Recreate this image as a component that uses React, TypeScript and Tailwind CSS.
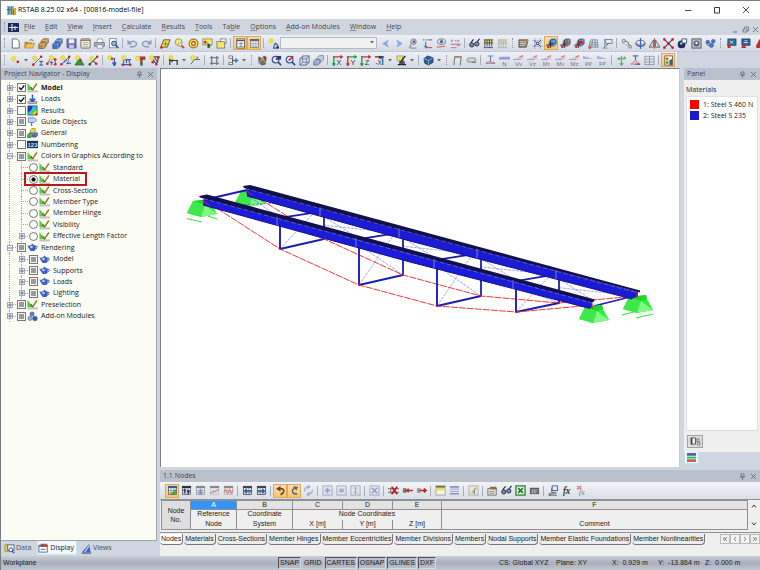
import type { ReactNode } from "react";
import clsx from "clsx";

const BLUE = "#2a4f94";

const Star = ({ x = 3.5, y = 3.5 }: { x?: number; y?: number }) => (
  <circle cx={x} cy={y} r="2.4" fill="#f6e33c" stroke="#d2bf48" strokeWidth=".6" />
);
const Dot = ({ x, y, c = "#cf2020" }: { x: number; y: number; c?: string }) => <circle cx={x} cy={y} r="1.4" fill={c} />;
const Glyph = ({ children, x = 6, y = 11, s = 7, c = "#444" }: { children: string; x?: number; y?: number; s?: number; c?: string }) => (
  <text x={x} y={y} fontSize={s} fill={c} textAnchor="middle" fontFamily="Liberation Sans, sans-serif">{children}</text>
);
const Line = ({ d, c = "#555", w = 1 }: { d: string; c?: string; w?: number }) => (
  <path d={d} stroke={c} strokeWidth={w} fill="none" />
);
const Grid = ({ c = "#555", head = "#444" }: { c?: string; head?: string }) => (
  <g>
    <rect x="1.5" y="1.5" width="9" height="9" fill="#eef1f6" stroke={c} strokeWidth=".8" />
    <rect x="1" y="1" width="10" height="2.4" fill={head} />
    <Line d="M1 6H11M1 8.5H11M4.5 3V11M7.5 3V11" c={c} w={0.5} />
  </g>
);
const Force = ({ t }: { t: string }) => (
  <g opacity=".85">
    <path d="M0 5L11 .5V5z" fill="#eebcc2" />
    <Line d="M0 5H8" c="#8d98e2" w={1.1} />
    <Line d="M7 2.5L11 .5" c="#d4606c" w={1.1} />
    <Glyph y={11.5} s={6.5} c="#666">{t}</Glyph>
  </g>
);
const Axis = ({ t, c1, c2 }: { t: string; c1: string; c2: string }) => (
  <g>
    <Line d="M1 2H11M9 .5L11.3 2L9 3.5" c={c1} w={1.3} />
    <Line d="M2 1V11M.5 9L2 11.5L3.5 9" c={c2} w={1.5} />
    <Glyph x={7.5} y={10.5} s={8} c="#333">{t}</Glyph>
  </g>
);
const Load = ({ c = "#777" }: { c?: string }) => (
  <g>
    <rect x="1" y="2" width="10" height="3" fill="#e2d65f" />
    <Line d="M1 2H11M1 5.5H11M2 2V9M4.5 2V9M7 2V9M9.5 2V9M1 10.5H11" c={c} w={0.9} />
    <Line d="M1 9.5L2 10.5L3 9.5M6 9.5L7 10.5L8 9.5" c={c} w={0.8} />
  </g>
);
const Cube = ({ x = 0, y = 0, c = "#3b6fb5", s = 1 }: { x?: number; y?: number; c?: string; s?: number }) => (
  <g transform={`translate(${x} ${y}) scale(${s})`}>
    <path d="M1 4L4 1H11V7L8 10H1z" fill={c} stroke="#333" strokeWidth=".7" />
    <path d="M1 4H8V10M8 4L11 1" fill="none" stroke="#fff" strokeOpacity=".6" strokeWidth=".7" />
  </g>
);
const Check = () => (
  <g>
    <path d="M.5 1L7 9H.5z" fill="#5cc942" />
    <path d="M1 9.6H11.5V11H1z" fill="#d5d7d5" stroke="#8f8f8f" strokeWidth=".4" />
    <Line d="M4 5.5L6 8.3" c="#4c7426" w={1.5} />
    <Line d="M5.8 8.8L10.8 1.5" c="#5e5a22" w={1.7} />
    <Line d="M6.2 7.6L10.6 1.3" c="#e8bd35" w={0.9} />
  </g>
);
const Teapot = () => (
  <g>
    <path d="M.5 3.5L3 4.5L4 8Q1.5 7.5 .5 3.5z" fill="#3f5fb8" />
    <path d="M9 4.6Q11.6 3.8 11 6.2Q10.4 7.6 9 7.8" fill="none" stroke="#344d9c" strokeWidth="1" />
    <path d="M2.6 4.2Q6 2 9.4 4.2Q10 8.6 7.8 9.8H4.2Q2 8.6 2.6 4.2z" fill="#3d5fbe" />
    <circle cx="4.9" cy="5.5" r="1.4" fill="#c6d4fa" />
    <rect x="5.2" y="2" width="1.6" height="1.1" fill="#2d4487" />
  </g>
);
const Nail = ({ c = "#2a7fd0" }: { c?: string }) => (
  <g>
    <path d="M3.5 3.5L6 1.2H11V6.5L8.7 8.7H3.5z" fill={c} stroke="#27405f" strokeWidth=".7" />
    <path d="M3.5 3.5H8.7V8.7M8.7 3.5L11 1.2" fill="none" stroke="#d7e8f8" strokeWidth=".6" />
    <Line d="M0 8L9 5.5M5 2V11" c="#333" w={0.9} />
    <Dot x={2.5} y={9.5} />
  </g>
);

const icons: Record<string, ReactNode> = {
  new: <path d="M2.5 1H7.5L10 3.5V11H2.5z" fill="#fff" stroke="#555" strokeWidth=".9" />,
  open: (
    <g>
      <path d="M.5 4H4L5 5H9V11H.5z" fill="#b98d1e" />
      <path d="M3 6H12L9.5 11H.7z" fill="#ecc850" stroke="#8e6b14" strokeWidth=".5" />
      <Line d="M6 2.5Q9 .5 10.5 3.5" c="#3d6e38" />
    </g>
  ),
  brownbox: <g><Cube x={3} y={0} c="#d09b4a" s={0.75} /><Cube x={0} y={3.5} c="#c38b38" s={0.8} /></g>,
  bluebox: <g><Cube x={3} y={0} c="#5d8ede" s={0.75} /><Cube x={0} y={3.5} c="#3f6ec4" s={0.8} /></g>,
  save: (
    <g>
      <path d="M1 1H11V11H2L1 10z" fill="#6e70b6" stroke="#45467d" strokeWidth=".7" />
      <rect x="3" y="1.3" width="6" height="4.5" fill="#eceefa" />
      <rect x="3.5" y="7.5" width="5" height="3.5" fill="#c9cbe4" />
    </g>
  ),
  report: (
    <g>
      <rect x="1" y="1" width="10" height="10" rx="1" fill="#f5f1e6" stroke="#6b665c" />
      <Line d="M1 2.5H11" c="#8b6b3c" w={1.2} /><Line d="M3 5H9M3 7H9M3 9H9" c="#a59d8a" w={0.9} />
    </g>
  ),
  print: (
    <g>
      <path d="M3 5L4 1H9L10 5" fill="#fff" stroke="#777" strokeWidth=".7" />
      <path d="M.7 5H11.3V9H.7z" fill="#aeb3be" stroke="#555" strokeWidth=".7" />
      <path d="M3 7.5H9L10 11H3.5z" fill="#fff" stroke="#66789e" strokeWidth=".7" />
    </g>
  ),
  preview: (
    <g>
      <rect x="1.5" y=".7" width="7.5" height="10" fill="#fafbfd" stroke="#777" strokeWidth=".8" />
      <circle cx="6.5" cy="6" r="2.6" fill="#8fb4e8" stroke={BLUE} /><Line d="M8.5 8L11.3 11" c={BLUE} w={1.7} />
    </g>
  ),
  undo: <g><path d="M.5 1.5V7H6z" fill="#8b9dc2" /><Line d="M2.5 5Q7 2 10 5Q11.5 8.5 7 9.5H3" c="#8b9dc2" w={1.5} /></g>,
  redo: <g><path d="M11.5 1.5V7H6z" fill="#8b9dc2" /><Line d="M9.5 5Q5 2 2 5Q.5 8.5 5 9.5H9" c="#8b9dc2" w={1.5} /></g>,
  plane: <g><path d="M4 2H11L8 10H1z" fill="#f5df3f" stroke="#444" strokeWidth=".9" /><Line d="M4 6.5H9M6 4V9" c="#7c762a" /><Dot x={1.5} y={10.3} /></g>,
  zoomy: <g><circle cx="5" cy="4.5" r="3.7" fill="#f6ea7a" stroke="#8d8237" strokeWidth=".8" /><Line d="M8 8L11 11" c="#b04536" w={1.8} /><path d="M4.500 5.500L9 5.500L7 10z" fill="#fff" stroke="#777" strokeWidth=".6" /></g>,
  target: <g><circle cx="6" cy="6" r="4.8" fill="#f4e63e" stroke="#a4761c" strokeWidth="1.3" /><circle cx="6" cy="6" r="2" fill="#fff" stroke="#a03c2a" strokeWidth="1.2" /></g>,
  select: <g><rect x="1" y="1" width="10" height="6.5" fill="#f8ec57" stroke="#777" strokeWidth=".8" /><Dot x={3.5} y={4.5} /><path d="M6 4.500L10 9H8L9 11.500L7 10.500L6 11z" fill="#345" /></g>,
  window: <g><rect x="5" y="1" width="6" height="5" fill="#fff" stroke="#777" strokeWidth=".9" /><rect x="1" y="4" width="8.5" height="7" fill="#f7e860" stroke="#777" strokeWidth=".9" /></g>,
  tabs: <g><rect x="2" y="1" width="8.5" height="10" fill="#f4f4f6" stroke="#555" /><Line d="M2 2.8H10" c="#555" w={1.2} /><Line d="M4 6H9M4 9H9M6.5 4.5V10" c="#777" w={0.8} /></g>,
  table: <Grid c="#777" head="#666" />,
  lights: <g><Star x={3.5} y={3} /><Line d="M6 11L7 7H10L11 11zM7 7L9 5" c="#3c6bb0" w={1.3} /><Dot x={10.5} y={10} c="#333" /></g>,
  prev: <path d="M9 2.500L3 6L9 9.500L7 6z" fill="#7fb0f0" stroke="#5f8cd6" strokeWidth=".5" />,
  next: <path d="M3 2.500L9 6L3 9.500L5 6z" fill="#7fb0f0" stroke="#5f8cd6" strokeWidth=".5" />,
  view1: <g opacity=".8"><circle cx="6" cy="4" r="3" fill="#b5c4dd" stroke="#667" /><circle cx="6.5" cy="4" r="1.3" fill="#334" /><Line d="M3 6V11H9M1 9L3 11" c="#888" w={1.2} /></g>,
  view2: <g><Line d="M1 2H3M4.5 2H6M7 2H11" c="#777" w={1.5} /><Line d="M4 4V10M2.5 8.5L4 10.5L5.5 8.5" c="#3c86b8" w={1.2} /><Line d="M4 10.5H11" c="#c33" /></g>,
  view3: <g opacity=".85"><ellipse cx="6" cy="4" rx="4.5" ry="3" fill="#ccd7e8" stroke="#667" /><circle cx="6" cy="4" r="1.6" fill="#233f78" /><Line d="M1 10L10 9" c="#d55" w={1.3} /></g>,
  view4: <g><Line d="M1 2L3 4M3 2L1 4M5 3H7M8 2L10 4M10 2L8 4" c="#888" /><Line d="M1 7H11M8 6L11 7L8 9" c="#d97c84" w={1.2} /><Line d="M1 10.5H7" c="#7aa4d6" w={1.2} /></g>,
  glasses: <g><circle cx="3" cy="7.5" r="2.3" fill="#7593c5" stroke="#223" /><circle cx="8.5" cy="6.5" r="2.3" fill="#7593c5" stroke="#223" /><Line d="M2 5L5 1.5M9 4L11.5 1" c="#223" w={1.2} /></g>,
  calc: <Load c="#3d3d48" />,
  calcg: <g opacity=".5"><Load /></g>,
  note: <g><path d="M1 2H11L9 10H1z" fill="#8f8776" stroke="#444" strokeWidth=".8" /><Line d="M2 4H9M2 6H9M2 8H8" c="#e7dcbf" w={0.8} /><Dot x={9.5} y={3} c="#c08a2a" /></g>,
  snap: <g><Line d="M0 3H12M0 9H12M3 0V12M9 0V12" c="#999" w={0.7} /><Line d="M2.5 2.5L9.5 9.5M9.5 2.5L2.5 9.5" c="#3b4fb8" w={1} /><circle cx="6" cy="6" r="2" fill="#4053bd" /><circle cx="6" cy="6" r=".8" fill="#fff" /></g>,
  nail: <Nail />,
  nail2: <g><Nail c="#3f8fd0" /><rect x="6" y="2.500" width="3" height="5" fill="#cc4b3a" /></g>,
  nail3: <g><Nail c="#2e9bd8" /><rect x="5" y="3" width="4.500" height="4" fill="#d02222" /></g>,
  mesh: <g opacity=".8"><Line d="M3 2H10L11 10H1zM2 5H10.5M1.5 7.5H11M5 2L4 10M7.5 2L8 10" c="#55707f" w={0.9} /><Dot x={2} y={10.5} /></g>,
  flag: <g><Line d="M3 1V11M1 11H6" c="#7686a4" /><rect x="4" y="1.500" width="7" height="4.500" fill="#dfe7f2" stroke="#577" strokeWidth=".8" /><Line d="M4 9L7 6" c="#444" /></g>,
  curve: <g><circle cx="3" cy="3" r="1.6" fill="#eee" stroke="#555" strokeWidth=".8" /><Line d="M4.5 3Q8 3.5 9.5 9" c="#555" /><circle cx="10" cy="9.500" r="1.5" fill="#eee" stroke="#555" strokeWidth=".8" /><Line d="M1 5L8 9" c="#899" w={0.7} /></g>,
  rotate: <g><ellipse cx="6" cy="6" rx="5" ry="3.500" fill="none" stroke="#a04d66" /><Line d="M6 0V12" c="#3b64b5" w={1.3} /><Line d="M1 6Q6 11 11 6" c="#4676c5" w={1.4} /></g>,
  mirror: <g><path d="M5 2V10H0zM7 2V10H12z" fill="#d3d6dc" stroke="#555" strokeWidth=".9" /><Line d="M6 0V12" c="#944" w={0.8} /></g>,
  cross: <g><Line d="M1.5 1.5L10.5 10.5M10.5 1.5L1.5 10.5" c="#444" w={1.3} /><Dot x={1.5} y={1.5} /><Dot x={10.5} y={1.5} /><Dot x={1.5} y={10.5} /><Dot x={10.5} y={10.5} /><Dot x={6} y={6} /></g>,
  sphere: <g><circle cx="5" cy="7" r="4.2" fill="#232a5c" /><rect x="5.500" y="1" width="5" height="4.500" fill="#fff" stroke="#456" /><circle cx="4.500" cy="6" r="1.3" fill="#a4b8ea" /></g>,
  eyebox: <g><rect x="1" y="1" width="10" height="10" fill="#c7c9a5" stroke="#555" /><circle cx="6" cy="6" r="3.3" fill="#4761a3" /><circle cx="6" cy="5.500" r="1.3" fill="#fff" /></g>,
  cluster: <g fill="#4b76c2" stroke="#26467f" strokeWidth=".6"><circle cx="3" cy="4.500" r="2" /><circle cx="9" cy="3.500" r="2" /><circle cx="7" cy="8" r="2.300" /><circle cx="3.500" cy="7" r="1.300" fill="#bcd0f2" /></g>,
  mod1: <g><rect x="2" y="1" width="9" height="7" fill="#236b9c" stroke="#234" strokeWidth=".6" /><Line d="M4 3L8 6M8 3L4 6" c="#bfe3f3" /><path d="M1 6L5 7V11H2z" fill="#cf2a2a" /></g>,
  mod2: <g><rect x="2" y="1" width="9" height="7" fill="#235d96" stroke="#234" strokeWidth=".6" /><Line d="M4 5H9M5 3H8" c="#d6e9f5" /><path d="M1 11L4 6.500L7 11z" fill="#cf2a2a" /></g>,
  mod3: <g><path d="M2 9L6 1L10 5V11H3z" fill="#c32c2c" /><rect x="7" y="2" width="4" height="5" fill="#2b5f94" /></g>,
  node: <g><Star x={4} y={4} /><Dot x={8.5} y={7.5} /></g>,
  line: <g><Line d="M1 11L10 2" c="#666" /><Star x={3} y={3.5} /><Dot x={1.5} y={10.5} /><Dot x={10} y={2} /><Line d="M8 7H12M10 7V11M8 11H12" c={BLUE} /></g>,
  arch: <g><Line d="M1.5 9L5 4H9L11 10" c="#666" /><Star x={6} y={3} /><Dot x={1.5} y={9.5} /><Dot x={10} y={10} /><Dot x={10} y={5} /><Line d="M4 8H8M6 7V11" c={BLUE} /></g>,
  member: <g><Line d="M1 11L10 2L8 10" c="#666" /><Star x={3} y={3} /><Dot x={10} y={2} /><Dot x={1.5} y={10} /><Line d="M7 9H12M4 8L7 5" c={BLUE} w={1.3} /></g>,
  support: <g><path d="M6 3L11 11H1z" fill="#2f9b3e" stroke="#19622a" strokeWidth=".6" /><Star x={4} y={3} /><Dot x={7} y={5.5} /></g>,
  hinge: <g><Line d="M2 10L10 2M3 3L9 10" c="#555" w={1.2} /><Star x={4} y={4} /><Dot x={10} y={2} /><Dot x={2} y={10} c="#444" /><Dot x={9} y={9.5} /></g>,
  nload: <g><Star x={3} y={3} /><Dot x={5.5} y={4} /><Line d="M8 3V10M6 8L8 11L10 8" c="#3558b8" w={1.4} /><Dot x={8} y={10.5} c="#3558b8" /></g>,
  mload: <g><Line d="M2 5H11M3 5V9M6 5V9M9 5V9M1 10.5H11" c="#3558b8" w={1.2} /><Star x={3} y={3} /><Dot x={2} y={10.5} /><Dot x={10} y={10.5} /></g>,
  tload: <g><path d="M3 2H11V5H8V10H6V5H3z" fill="#c42a2a" stroke="#444" strokeWidth=".5" /><Star x={3} y={3.5} /><Dot x={7} y={10.5} c="#2c8b37" /></g>,
  free: <g><Line d="M2 2H11L8 10zM6 3L10 8" c="#444" w={1.2} /><Star x={3} y={3} /><Dot x={10} y={3} /><Dot x={8} y={10} /><Dot x={4} y={8} /></g>,
  dim: <g><Star x={3} y={3} /><Line d="M1 6H11M2 4V11M10 6V11M5 5L4 8" c="#333" w={1.3} /></g>,
  dimx: <g><Star x={3} y={3} /><Line d="M1 10L5 5H11M7 2L9 4M9 2L7 4" c="#555" /></g>,
  grid: <Line d="M3 1V11M8.5 1V11M1 3H11M1 9H11" c="#65696e" w={1.1} />,
  tree: <g><Line d="M1 2H5V10H1M5 6H9" c="#555" w={1.1} /><rect x="1" y="1" width="4" height="2.600" fill="#eee" stroke="#555" strokeWidth=".7" /><rect x="1" y="8" width="4" height="2.600" fill="#eee" stroke="#555" strokeWidth=".7" /><path d="M8 3L11.500 6L8 9z" fill="#3a7ad0" /></g>,
  hand: <g><path d="M2 2L5 4L8 1L10 4L9 10L5 11L2 8z" fill="#7f6d5d" stroke="#443a33" strokeWidth=".7" /><Line d="M1 9L9 2M4 2L10 9" c="#c7b8a4" /><Dot x={9} y={3} c="#933" /></g>,
  zoomw: <g><circle cx="5" cy="5" r="3.700" fill="#dbe6f6" stroke={BLUE} strokeWidth="1.200" /><Line d="M7.5 7.5L11 11" c={BLUE} w={1.9} /><path d="M6 1H11V5H6z" fill="#1e3f86" /><Dot x={6.5} y={4} /></g>,
  zooma: <g><circle cx="5" cy="5" r="3.700" fill="#e6e6f2" stroke={BLUE} strokeWidth="1.200" /><Line d="M7.5 7.5L11 11" c={BLUE} w={1.9} /><Line d="M4 6L9 1.5" c="#c22" w={1.8} /></g>,
  cube: <g><path d="M1 4L4 1H11V8L8 11H1z" fill="#d5deed" stroke="#4c6388" strokeWidth=".9" /><path d="M1 4H8V11M8 4L11 1M4 1V8H11M4 8L1 11" fill="none" stroke="#4c6388" strokeWidth=".7" /></g>,
  cubes: <g><Cube x={4} y={0} c="#b8c7e0" s={0.7} /><Cube x={0} y={4} c="#92a8cd" s={0.7} /></g>,
  ax: <Axis t="X" c1="#d03030" c2="#2f9e3a" />,
  ay: <Axis t="Y" c1="#2f9e3a" c2="#d03030" />,
  az: <Axis t="Z" c1="#d03030" c2="#2f9e3a" />,
  axn: <g><Line d="M1 2H11" c="#c22" w={1.5} /><Line d="M9.5 2V11" c="#2f6fd0" w={1.5} /><rect x="5" y="1" width="4" height="3" fill="#344" /><Glyph x={5} y={10.5} s={7} c="#333">-X</Glyph></g>,
  paint: <g><rect x="1" y="1" width="6" height="5" fill="#f3e14a" stroke="#777" strokeWidth=".6" /><Line d="M10 1L5 8M2 10.5H11" c="#222" w={1.6} /><path d="M3 7L9 6L10 11H4z" fill="#333" opacity=".8" /></g>,
  solid: <g><path d="M1 4L5 1L11 3V8L6 11L2 9z" fill="#2b5f94" stroke="#123" strokeWidth=".7" /><Line d="M1 4L6 6L11 3M6 6V11" c="#9cc3e8" w={0.8} /></g>,
  frame: <g><Line d="M2 11L3 2H10L9 11" c="#6f7f78" w={1.2} /><Line d="M3 2H10" c="#d06a6a" w={1.2} /></g>,
  box3: <g opacity=".7"><rect x="1" y="3" width="10" height="5" rx="2" fill="#aaa" stroke="#777" strokeWidth=".7" /><Line d="M3 5.5H9" c="#fff" /><Line d="M6 8H11" c="#555" w={1.5} /></g>,
  defl: <g><Line d="M3 1H9M6 1V7" c="#667ed0" w={1.1} /><Line d="M1 9L5 7L11 9" c="#d66" /><Line d="M1 9H11" c="#77a" /></g>,
  fn: <g><rect x="0" y="2" width="12" height="3" fill="#8f9be6" /><Glyph y={11.5} s={6.5} c="#666">N</Glyph></g>,
  fvy: <Force t="Vy" />, fvz: <Force t="Vz" />, fmt: <Force t="Mт" />, fmy: <Force t="My" />, fmz: <Force t="Mz" />,
  fpy: <g><path d="M0 1L11 4H0z" fill="#9da8ea" /><Glyph y={10.5} s={6.5} c="#666">py</Glyph></g>,
  fpz: <g><path d="M0 1L11 4H0z" fill="#9da8ea" /><Glyph y={10.5} s={6.5} c="#666">pz</Glyph></g>,
  forces: <g opacity=".8"><Line d="M2 4H11M6 1V11M4 9L6 11L8 9" c="#4aa455" w={1.4} /><Dot x={3} y={4} c="#678" /><Dot x={9.5} y={3} c="#4aa455" /></g>,
  stress: <g><Line d="M3 1H9M6 1V6" c="#4a66c8" w={1.2} /><path d="M1 10L6 6L11 10z" fill="#f3c5c5" stroke="#c66" strokeWidth=".8" /><Line d="M6 10H11" c="#44c" w={1.2} /></g>,
  results: <g opacity=".75"><Line d="M1 1.5H11M1 4.5H11M1 7.5H11M1 10.5H11M1 1V11M6 1V11M11 1V11" c="#777b9a" w={0.9} /></g>,
  colors: <g><rect x="2" y="1" width="8.500" height="10" fill="#f8f8f8" stroke="#444" strokeWidth=".8" /><rect x="3" y="3" width="3" height="2" fill="#d22" /><rect x="3" y="5" width="3" height="2" fill="#dc2" /><rect x="3" y="7" width="3" height="2.500" fill="#2a4" /><path d="M7 6L10 4V11H7z" fill="#555" /></g>,
  g1: <g><Grid head="#2a6090" /><path d="M3 10L10 4V10z" fill="#46b03c" /></g>,
  g2: <g><Grid head="#234" /><Line d="M4 4V9M8 5V10M2.5 5.5H5.5M6.5 7H9.5" c="#222e66" w={1.2} /></g>,
  g3: <g opacity=".6"><Grid /><Line d="M6 4V9M4 7L6 10L8 7" c="#35a" w={1.2} /></g>,
  g4: <g opacity=".6"><Grid c="#aaa" /><Line d="M1 9L11 5" c="#c44" w={1.4} /></g>,
  g5: <g opacity=".6"><Grid c="#999" /><Line d="M1 8L3 5L5 9L7 5L9 9L11 5" c="#d33" w={1.2} /></g>,
  gl: <g><Grid c="#444" /><Line d="M10 6.5H3M5 4.5L3 6.5L5 8.5" c="#2456c0" w={1.5} /></g>,
  gr: <g><Grid c="#444" /><Line d="M2 6.5H9M7 4.5L9 6.5L7 8.5" c="#2456c0" w={1.5} /></g>,
  back: <g><path d="M1 4L6 1V7z" fill="#5d4a2c" /><Line d="M5 4Q10 3.5 9.5 7Q9 9.5 6 10.5" c="#5d4a2c" w={1.8} /></g>,
  fwd: <g><path d="M10 2L4 1.500L8 6z" fill="#6d5a50" /><Line d="M6 3.5Q2.5 5.5 4.5 8.5Q6 10.5 9 9.5" c="#5a5a80" w={1.6} /></g>,
  sync: <g opacity=".7"><Line d="M2 7Q1 2 7 2M5 0L7.5 2L5 4M10 5Q11 10 5 10M7 8L4.5 10L7 12" c="#7f96bf" w={1.3} /></g>,
  s1: <g opacity=".55"><rect x="1" y="1" width="10" height="10" fill="#dfe3ec" stroke="#778" /><Line d="M6 3V9M3 6H9" c="#3864c8" w={1.8} /></g>,
  s2: <g opacity=".55"><rect x="1" y="1" width="10" height="10" fill="#dfe3ec" stroke="#778" /><rect x="3.500" y="4" width="5" height="4" fill="#5f83d0" /></g>,
  s3: <g opacity=".55"><rect x="1" y="1" width="10" height="10" fill="#dfe3ec" stroke="#778" /><Line d="M6 2.5V9.5M4.5 4L6 2.5L7.5 4M4.5 8L6 9.5L7.5 8" c="#4a5f96" /></g>,
  s4: <g opacity=".55"><rect x="1" y="1" width="10" height="10" fill="#dfe3ec" stroke="#778" /><Line d="M3 3L9 9M9 3L3 9" c="#3864a0" w={1.6} /></g>,
  rx: <g><Line d="M0 4H12M0 8H12M3 3V9" c="#666" w={1} /><Line d="M4 2L10 10M10 2L4 10" c="#c41818" w={1.9} /></g>,
  rl: <g><rect x="1" y="3.500" width="4" height="5" fill="#777" /><Line d="M12 6H5M7.5 4L5 6L7.5 8" c="#c03030" w={1.5} /></g>,
  rr: <g><rect x="1" y="3.500" width="4" height="5" fill="#999" /><Line d="M4 6H11M8.5 4L11 6L8.5 8" c="#c02020" w={1.6} /></g>,
  ty: <g><rect x="1" y="1" width="10" height="10" fill="#f4f2dc" stroke="#888" strokeWidth=".7" /><rect x="1" y="1" width="10" height="2" fill="#6d7038" /><rect x="1" y="3" width="10" height="3" fill="#e7e070" /></g>,
  tp: <g><Line d="M1 2H11M1 9.5H11" c="#8a8fc8" w={1.8} /><Line d="M1 4.5H11M1 7H11" c="#9a9dbb" w={1} /></g>,
  edit: <g opacity=".75"><rect x="1" y="1" width="10" height="10" fill="#ece9cd" stroke="#999" /><Line d="M4 9L9 3" c="#b6a020" w={2} /><Line d="M7 6V10" c="#45a" /></g>,
  props: <g><rect x="1" y="4" width="9" height="7" fill="#e9e5dd" stroke="#555" strokeWidth=".8" /><path d="M3 2H10L11 5H4z" fill="#8c6a4a" /><Line d="M2.5 7H8M2.5 9H8" c="#777" w={0.8} /></g>,
  excel: <g><rect x="1" y="1" width="10" height="10" fill="#e6f3e2" stroke="#2e7d32" strokeWidth="1.400" /><Line d="M3.5 3.5L8.5 8.5M8.5 3.5L3.5 8.5" c="#237a2b" w={1.8} /></g>,
  keys: <g><rect x="1" y="3" width="10" height="7" fill="#5c5c60" /><Line d="M2 5.5H10M2 7.7H10M4 5V9.5M6.5 5V9.5" c="#d5d5da" w={0.7} /></g>,
  abc: <g><rect x="4.500" y="1" width="6" height="5" fill="#e9eef7" stroke={BLUE} strokeWidth=".9" /><Line d="M4 3V8H9" c="#667" /><Glyph x={5} y={11.8} s={6} c="#333">abc</Glyph></g>,
  fx: <text x="1" y="9.500" fontSize="11" fontStyle="italic" fill="#222" stroke="#222" strokeWidth=".2" fontFamily="Liberation Serif, serif">fx</text>,
  fxx: <g opacity=".6"><text x="3" y="10.500" fontSize="9" fontStyle="italic" fill="#444" fontFamily="Liberation Serif, serif">fx</text><Line d="M1 1L6 5M6 1L1 5" c="#c33" w={1.4} /></g>,
  check: <Check />,
  teapot: <Teapot />,
  loads: <g><Line d="M6 .5V7M3 5L6 8L9 5" c="#3c5fae" w={1.7} /><rect x="1" y="8" width="10" height="2.600" rx="1" fill="#b4bdd0" stroke="#556" strokeWidth=".6" /><circle cx="6" cy="7" r="1.800" fill="#34509c" /></g>,
  rainbow: (
    <g>
      <rect x="1" y="1" width="10" height="10" fill="#2ec2ee" />
      <path d="M1 1H6Q6 6 1 8z" fill="#2339c9" /><path d="M4 11Q5 5 11 4V11z" fill="#5bd13c" />
      <path d="M6 11Q7 7 11 6V11z" fill="#f0d82c" /><path d="M8.500 11Q9 9 11 8.500V11z" fill="#e42a20" />
      <rect x="1" y="1" width="10" height="10" fill="none" stroke="#334" strokeWidth=".7" />
    </g>
  ),
  guide: <g><path d="M1.500 2H8L10.500 4.500L8 7H1.500z" fill="#c2d3f3" stroke="#5f7cb4" strokeWidth=".9" /><Line d="M5 7V11" c="#777" w={1.4} /></g>,
  blocks: <g><Cube x={3} y={0} c="#e0d23a" s={0.55} /><Cube x={0} y={5} c="#3f9e48" s={0.55} /><Cube x={5.5} y={4.5} c="#3c69b8" s={0.55} /></g>,
  numbers: <g><rect x="0" y="2" width="12" height="8" fill="#16365e" /><text x="6" y="8.500" fontSize="6.500" fontWeight="bold" fill="#bfe0f2" textAnchor="middle" fontFamily="Liberation Sans, sans-serif">123</text></g>,
  addon: <g fill="#5f7fbd" stroke="#31497f" strokeWidth=".6"><circle cx="5.500" cy="3.300" r="2.300" /><circle cx="3.300" cy="8" r="2.300" fill="#a9b4c9" /><circle cx="8.700" cy="8.200" r="2.500" fill="#3a5db5" /></g>,
  data: <g><path d="M1 2H5V9H1z" fill="#f2d33b" stroke="#867019" strokeWidth=".7" /><rect x="4" y="2" width="7" height="6" fill="#dde6f4" stroke="#456" strokeWidth=".8" /><circle cx="7.500" cy="7.500" r="2" fill="#fff" stroke={BLUE} /><Line d="M9 9L11 11" c={BLUE} w={1.4} /></g>,
  display: <g><rect x="1" y="4" width="9" height="7" fill="#fff" stroke="#357" strokeWidth=".9" /><path d="M3 2H10L11 5.500H3z" fill="#b3523a" /><path d="M1 3H5V5H1z" fill="#3567b0" /><Line d="M3 8H8" c="#468" /></g>,
  views: <g><path d="M9 1L10.500 10H1z" fill="#3a66c4" /><Line d="M4 10L9 3" c="#cfe0ff" w={1.2} /><Line d="M1 11H11" c="#235" /></g>,
};

const Icon = ({ name }: { name: string }) => (
  <svg viewBox="0 0 12 12" className="size-[11px] shrink-0" aria-hidden>{icons[name]}</svg>
);

// "|" separator, ":" grip, "v" drop-down arrow, leading "*" = pressed
function Tools({ items }: { items: string }) {
  return (
    <>
      {items.split(" ").map((t, i) => {
        if (t === "|") return <span key={i} className="flex h-2.5 w-[5px] shrink-0 justify-center"><span className="w-px bg-[#a6adbb]" /></span>;
        if (t === ":") return <span key={i} className="flex h-2.5 w-[7px] shrink-0 justify-center"><span className="w-0 border-l border-dotted border-[#8f97a6]" /></span>;
        if (t === "v")
          return (
            <button key={i} aria-label="More" className="flex w-2 shrink-0 justify-center">
              <svg viewBox="0 0 4 3" className="h-[3px] w-1"><path d="M0 0H4L2 2.500z" fill="#666" /></svg>
            </button>
          );
        const on = t.startsWith("*");
        const name = on ? t.slice(1) : t;
        return (
          <button
            key={i}
            aria-label={name}
            className={clsx(
              "grid h-3.5 w-3.5 shrink-0 place-items-center",
              on && "border border-[#d9a95e] bg-gradient-to-b from-[#fbdcae] to-[#fdc566]"
            )}
          >
            <Icon name={name} />
          </button>
        );
      })}
    </>
  );
}

const Pin = () => (
  <svg viewBox="0 0 7 7" className="size-[7px]" aria-hidden><path d="M2 1H5V4H2zM1 4H6M3.500 4V7" fill="none" stroke="#666d78" strokeWidth=".8" /></svg>
);
const Close = () => (
  <svg viewBox="0 0 7 7" className="size-[7px]" aria-hidden><path d="M1 1L6 6M6 1L1 6" stroke="#666d78" strokeWidth=".9" /></svg>
);

const DockTitle = ({ children }: { children: string }) => (
  <div className="flex h-3 shrink-0 items-center bg-[#b9c1cd] pr-[3px] pl-[3px] text-[#3f444d]">
    <h2 className="flex-1">{children}</h2>
    <button aria-label={`Pin ${children}`} className="mr-1"><Pin /></button>
    <button aria-label={`Close ${children}`}><Close /></button>
  </div>
);

type Row = { label: string; icon: string; exp?: "+" | "-"; box?: "on" | "off" | "mix"; sub?: boolean; bold?: boolean; picked?: boolean };

const rows: Row[] = [
  { label: "Model", icon: "check", exp: "+", box: "on", bold: true },
  { label: "Loads", icon: "loads", exp: "+", box: "on" },
  { label: "Results", icon: "rainbow", exp: "+", box: "off" },
  { label: "Guide Objects", icon: "guide", exp: "+", box: "mix" },
  { label: "General", icon: "blocks", exp: "+", box: "mix" },
  { label: "Numbering", icon: "numbers", exp: "+", box: "off" },
  { label: "Colors in Graphics According to", icon: "check", exp: "-", box: "mix" },
  { label: "Standard", icon: "check", sub: true },
  { label: "Material", icon: "check", sub: true, picked: true },
  { label: "Cross-Section", icon: "check", sub: true },
  { label: "Member Type", icon: "check", sub: true },
  { label: "Member Hinge", icon: "check", sub: true },
  { label: "Visibility", icon: "check", sub: true },
  { label: "Effective Length Factor", icon: "check", sub: true, exp: "+" },
  { label: "Rendering", icon: "teapot", exp: "-", box: "mix" },
  { label: "Model", icon: "teapot", sub: true, exp: "+", box: "mix" },
  { label: "Supports", icon: "teapot", sub: true, exp: "+", box: "mix" },
  { label: "Loads", icon: "teapot", sub: true, exp: "+", box: "mix" },
  { label: "Lighting", icon: "teapot", sub: true, exp: "+", box: "mix" },
  { label: "Preselection", icon: "check", exp: "+", box: "mix" },
  { label: "Add-on Modules", icon: "addon", exp: "+", box: "mix" },
];

function TreeRow({ row }: { row: Row }) {
  return (
    <li className="relative flex items-stretch pl-[3px]">
      {row.sub && <span className="ml-[5px] w-[7px] border-l border-dotted border-[#a5a5a5]" />}
      <span className="relative flex w-3 shrink-0 items-center">
        <span className="absolute inset-y-0 left-[5px] border-l border-dotted border-[#a5a5a5]" />
        <span className="absolute right-0 left-[5px] border-t border-dotted border-[#a5a5a5]" />
        {row.exp && (
          <button aria-label={`Toggle ${row.label}`} className="relative ml-[3px] grid size-[6px] place-items-center border border-[#a3a8b0] bg-white">
            <svg viewBox="0 0 4 4" className="size-1"><path d={row.exp === "+" ? "M0 2H4M2 0V4" : "M0 2H4"} stroke="#4b5f8f" strokeWidth=".9" /></svg>
          </button>
        )}
      </span>
      <label className="flex items-center">
        <span className="relative mr-px grid size-[10px] place-items-center">
          {row.box ? (
            <>
              <input
                type="checkbox"
                defaultChecked={row.box !== "off"}
                className={clsx(
                  "size-[9px] appearance-none border border-[#777]",
                  row.box === "mix" ? "bg-[#9b9b9b] shadow-[inset_0_0_0_1px_#f5f5f5]" : "bg-white"
                )}
              />
              {row.box === "on" && (
                <svg viewBox="0 0 9 9" className="pointer-events-none absolute size-[9px]"><path d="M2 4.500L4 6.500L7.300 2.500" fill="none" stroke="#111" strokeWidth="1.300" /></svg>
              )}
            </>
          ) : (
            <input
              type="radio"
              name="color-mode"
              defaultChecked={row.picked}
              className="size-[9px] appearance-none rounded-full border border-[#777] bg-white checked:bg-[radial-gradient(circle,#111_35%,#fff_50%)]"
            />
          )}
        </span>
        <Icon name={row.icon} />
        <span className={clsx("pl-[3px] whitespace-nowrap", row.bold && "font-bold")}>{row.label}</span>
      </label>
      {row.picked && <span className="pointer-events-none absolute -inset-y-px left-[23px] w-[63px] border-2 border-[#ba1a1e]" />}
    </li>
  );
}

const Support = ({ x, y }: { x: number; y: number }) => (
  <g transform={`translate(${x} ${y})`}>
    <path d="M-9 -11L-15 1L-1 5L15 2L9 -9L8 -13z" fill="#2df03a" />
    <path d="M-9 -11L-15 1L-1 5L3 -7z" fill="#3ee84a" />
    <path d="M-1 5L3 -7L15 2z" fill="#7ff985" />
    <path d="M-9 -11L3 -7L9 -9L8 -13z" fill="#21d52e" />
  </g>
);

const FRONT = [[280, 249], [359, 285], [437, 306], [516, 312]];
const BACK = [[324, 239], [403, 275], [481, 296], [559, 303]];
const frontTop = (x: number) => 195 + (x - 202) * 0.268;
const backTop = (x: number) => 186 + (x - 243) * 0.265;

function Bridge() {
  return (
    <svg viewBox="161 69 518 398" className="absolute inset-0 size-full" role="img" aria-label="Bridge model">
      <Support x={250} y={202} />
      <Support x={638} y={308} />
      <g stroke="#1f1fcf" strokeWidth=".6" strokeDasharray="3 1" opacity=".65">
        {FRONT.map(([x, y], i) => (
          <g key={x}>
            <path d={`M${x} ${y}L${x + 40} ${backTop(x + 40)}M${x} ${frontTop(x) + 8}L${BACK[i][0]} ${BACK[i][1]}`} />
            <path d={`M${x + 43} ${backTop(x + 43) + 9}L${x + 75} ${frontTop(x + 75)}M${x + 43} ${backTop(x + 43) + 18}L${x + 100} ${backTop(x + 100) + 9}`} />
          </g>
        ))}
        <path d="M232 205L283 203M250 197L277 216" />
      </g>
      <path d="M247 191L324 239L403 275L481 296L559 303L637 296" fill="none" stroke="#f02020" strokeWidth=".9" strokeDasharray="7 1" />
      <g fill="none" stroke="#1c1cb4" strokeWidth="1.800">
        {BACK.map(([x, y]) => <path key={x} d={`M${x} ${backTop(x) + 8}V${y}`} />)}
        {FRONT.map(([x, y], i) => <path key={x} d={`M${x} ${y}L${BACK[i][0]} ${BACK[i][1]}M${x} ${frontTop(x) + 2}L${x + 41} ${backTop(x + 41) + 5}`} />)}
        <path d="M208 199L247 190M594 306L634 296" />
      </g>
      <path d="M246 187L410 231L638 292V296L632 299L410 241L247 196z" fill="#1b1bd6" />
      <path d="M247 196L410 241L632 299" stroke="#12127a" fill="none" />
      <path d="M243 186L250 185L640 290.500V292.500L410 232.500L244 188z" fill="#10104e" />
      <path d="M245 188.500L638 293" stroke="#8f8fc0" strokeWidth=".5" strokeDasharray="5 2" />
      <Support x={202} y={212} />
      <Support x={594} y={318} />
      <path d="M204 200L280 249L359 285L437 306L516 312L594 305" fill="none" stroke="#f02020" strokeWidth=".9" strokeDasharray="7 1" />
      <g stroke="#1c1cc4" strokeWidth="1.900">
        {FRONT.map(([x, y]) => <path key={x} d={`M${x} ${frontTop(x) + 8}V${y}`} />)}
      </g>
      <path d="M204 196L410 251L592 300V307L590 308.500L410 262L203 205z" fill="#1b1bdc" />
      <path d="M203 205L410 262L590 308.500" stroke="#12127a" fill="none" />
      <path d="M199 196L207 194.500L595 299.500L593 302.500L410 253.500L200 197.500z" fill="#10104e" />
      <path d="M203 198.500L592 303" stroke="#9a9ac4" strokeWidth=".5" strokeDasharray="5 2" />
      <g stroke="#a3a3d6" strokeWidth=".7">
        {FRONT.map(([x]) => (
          <path key={x} d={`M${x - 3} ${frontTop(x) + 1}v9M${x + 40} ${backTop(x + 40) + 1}v9`} />
        ))}
      </g>
      <path d="M202 200L210 206M247 191L252 195M592 303V309M637 293V298" stroke="#e81c1c" />
      <g fill="#c01a50">
        {FRONT.map(([x, y], i) => (
          <g key={x}>
            <circle cx={x} cy={y} r="1" />
            <circle cx={BACK[i][0]} cy={BACK[i][1]} r="1" />
          </g>
        ))}
      </g>
      <path d="M187 218.500L202 222M208 216L217 219M622 315L634 312M636 318L653 314" stroke="#3fdc49" strokeWidth="1.200" />
    </svg>
  );
}

const menus = ["File", "Edit", "View", "Insert", "Calculate", "Results", "Tools", "Table", "Options", "Add-on Modules", "Window", "Help"];
const tableTabs = ["Nodes", "Materials", "Cross-Sections", "Member Hinges", "Member Eccentricities", "Member Divisions", "Members", "Nodal Supports", "Member Elastic Foundations", "Member Nonlinearities"];
const modes = ["SNAP", "GRID", "CARTES", "OSNAP", "GLINES", "DXF"];

function MenuLabel({ text }: { text: string }) {
  const at = text === "Table" ? 2 : 0;
  return <>{text.slice(0, at)}<u className="decoration-[#888]">{text[at]}</u>{text.slice(at + 1)}</>;
}

export default function App() {
  return (
    <div className="flex min-h-screen flex-col overflow-hidden border-t border-l border-[#7a7d82] bg-[#d0d6e0] font-['Open_Sans','Noto_Sans',sans-serif] text-[7px] leading-[10px] text-[#222]">
      <header className="flex h-[18px] items-center bg-white pr-2.5 pl-[5px]">
        <svg viewBox="0 0 12 12" className="mr-px size-[11px]" aria-hidden>
          <path d="M1 1H9V11H1z" fill="#8cc0dc" /><path d="M3 2V10M6 2V10M1 5H9" stroke="#2f6f99" strokeWidth="1.200" /><path d="M6 4L11 3V11H7z" fill="#d6a83a" /><path d="M8 5V11" stroke="#7c5a18" />
        </svg>
        <h1 className="flex-1 text-black">RSTAB 8.25.02 x64 - [00816-model-file]</h1>
        <div className="flex gap-[21px]">
          <button aria-label="Minimize"><svg viewBox="0 0 8 8" className="size-2"><path d="M1 4.500H7.500" stroke="#222" strokeWidth=".8" /></svg></button>
          <button aria-label="Maximize"><svg viewBox="0 0 8 8" className="size-2"><path d="M1.500 1.500H6.500V7H1.500z" fill="none" stroke="#222" strokeWidth=".9" /></svg></button>
          <button aria-label="Close"><svg viewBox="0 0 8 8" className="size-2"><path d="M1 1L7 7M7 1L1 7" stroke="#222" strokeWidth=".8" /></svg></button>
        </div>
      </header>

      <nav className="flex h-4 items-center pr-px text-[#41454d]">
        <Tools items=":" />
        <svg viewBox="0 0 11 9" className="mr-[5px] h-[9px] w-[11px]" aria-hidden><rect width="11" height="9" fill="#1c2a5c" /><path d="M1 4.500H10M4 1V8M7 3V7" stroke="#e8ecf8" strokeWidth="1.100" /></svg>
        <div className="flex flex-1 gap-2.5">
          {menus.map((m) => <button key={m}><MenuLabel text={m} /></button>)}
        </div>
        <div className="flex gap-[3px] pt-1">
          <button aria-label="Minimize document"><svg viewBox="0 0 7 7" className="size-[7px]"><path d="M1 6H5" stroke="#666d78" /></svg></button>
          <button aria-label="Restore document"><svg viewBox="0 0 7 7" className="size-[7px]"><path d="M1 3H5V6H1zM2.500 2.500V1H6.500V5H5" fill="none" stroke="#666d78" strokeWidth=".8" /></svg></button>
          <button aria-label="Close document"><Close /></button>
        </div>
      </nav>

      <div className="flex h-[17px] items-center overflow-hidden border-b border-[#c3c9d5] bg-gradient-to-b from-[#eef1f6] to-[#d3d9e4]">
        <Tools items=": new open brownbox bluebox save report print preview | undo redo | plane zoomy target select window | *tabs *table | lights" />
        <div className="relative mr-px w-[97px] shrink-0">
          <select aria-label="Load case" disabled className="block h-3 w-full appearance-none border border-[#b4b9c4] bg-[#f1f1f2]" />
          <svg viewBox="0 0 4 3" className="pointer-events-none absolute top-1 right-[3px] h-[3px] w-1"><path d="M0 0H4L2 2.500z" fill="#666" /></svg>
        </div>
        <Tools items="prev next view1 view2 view3 view4 | glasses calc calcg : note snap *nail nail2 nail3 mesh flag | curve rotate mirror cross sphere eyebox cluster : mod1 mod2 mod3" />
      </div>

      <div className="flex">
        <div className="flex h-4 items-center bg-gradient-to-b from-[#eef1f6] to-[#d3d9e4] pr-0.5">
          <Tools items=": node v line arch member support hinge | nload mload tload free | dim v dimx | grid | tree v : hand zoomw zooma cube cubes | ax ay az axn v paint v | solid v : frame box3 | defl fn fvy fvz fmt fmy fmz fpy fpz | forces stress results | *colors" />
        </div>
      </div>

      <main className="flex flex-1">
        <aside className="mr-[3px] flex w-[156px] shrink-0 flex-col">
          <DockTitle>Project Navigator - Display</DockTitle>
          <div className="flex-1 border-r border-b border-[#9ea4ae] bg-[#fbfcf3] pt-[2px]">
            <ul className="grid h-[240px] auto-rows-fr">
              {rows.map((r, i) => <TreeRow key={i} row={r} />)}
            </ul>
          </div>
          <div className="flex h-[15px] items-start gap-1 pl-[3px] text-[#4a4f58]">
            {[["data", "Data"], ["display", "Display"], ["views", "Views"]].map(([icon, label]) => (
              <button
                key={label}
                className={clsx("flex h-3.5 items-center gap-px pr-0.5", label === "Display" && "border border-t-0 border-[#c4e8ee] bg-[#f4f8fb] text-[#222]")}
              >
                <Icon name={icon} />
                {label}
              </button>
            ))}
          </div>
        </aside>

        <div className="flex min-w-0 flex-1 flex-col">
          <div className="flex flex-1">
            <section className="relative flex-1 border-t border-r border-l border-[#7c8087] border-r-[#c9cdd4] bg-white">
              <Bridge />
            </section>
            <aside className="ml-1 flex w-[76px] shrink-0 flex-col">
              <DockTitle>Panel</DockTitle>
              <div className="flex flex-1 flex-col bg-[#efefef] px-[2px] pt-[5px]">
                <h3>Materials</h3>
                <ul className="mt-px flex-1 border border-[#e0e0e0] bg-white pt-0.5 pl-[3px]">
                  <li className="flex h-[11px] items-center gap-1 whitespace-nowrap"><span className="h-[9px] w-[9px] bg-[#ff0000]" />1: Steel S 460 N</li>
                  <li className="flex h-[11px] items-center gap-1 whitespace-nowrap"><span className="h-[9px] w-[9px] bg-[#1a1acb]" />2: Steel S 235</li>
                </ul>
                <button aria-label="Panel settings" className="my-1 ml-px grid h-[13px] w-4 place-items-center border border-[#a2a2a2] bg-[#dcdcdc]">
                  <svg viewBox="0 0 12 10" className="h-[9px] w-[11px]"><path d="M1 1H6V8H1z" fill="#eee" stroke="#555" /><path d="M1 1H2.500V8H1z" fill="#4a3a2a" /><path d="M7 2H10V5H7zM8 6H11V9H8z" fill="#ccc" stroke="#666" strokeWidth=".7" /></svg>
                </button>
              </div>
              <div className="flex h-[15px] items-start">
                <button aria-label="Color scale" className="grid h-3 w-[15px] place-items-center border border-t-0 border-[#bfe3ea] bg-[#eef4f7]">
                  <svg viewBox="0 0 9 9" className="size-[9px]"><path d="M0 1H9" stroke="#1414c8" strokeWidth="1.400" /><path d="M0 4.500H9" stroke="#0bd312" strokeWidth="1.600" /><path d="M0 8H9" stroke="#d11212" strokeWidth="1.400" /><path d="M0 2.500H9M0 6.300H9" stroke="#555" strokeWidth=".7" /></svg>
                </button>
              </div>
            </aside>
          </div>

          <section className="mt-[3px] flex flex-col bg-[#efefef]">
            <DockTitle>1.1 Nodes</DockTitle>
            <div className="flex h-[17px] items-center bg-gradient-to-b from-[#f1f3f7] to-[#d9dee7] pl-[5px]">
              <Tools items="*g1 g2 g3 g4 g5 | gl gr | *back *fwd sync | s1 s2 s3 | s4 | rx rl rr | ty tp | edit | props glasses excel keys | abc fx fxx" />
            </div>
            <div className="flex border-t border-b border-[#8d9197] pb-0.5 font-['Liberation_Sans',Arial,sans-serif] leading-[9px]">
              <table className="ml-px w-full table-fixed border-collapse text-center">
                <colgroup>
                  <col className="w-[29px]" /><col className="w-[46px]" /><col className="w-[56px]" /><col className="w-[50px]" /><col className="w-[50px]" /><col className="w-[49px]" /><col />
                </colgroup>
                <thead className="[&_th]:p-0 [&_th]:font-normal">
                  <tr className="h-[9px] bg-[#e3e3e3] leading-2 [&>th+th]:border [&>th+th]:border-[#909090]">
                    <th rowSpan={3} className="border border-[#909090] bg-[#dedede] leading-[9px]">Node<br />No.</th>
                    <th className="bg-[#3094fa] text-white">A</th><th>B</th><th>C</th><th>D</th><th>E</th><th>F</th>
                  </tr>
                  <tr className="h-2.5 leading-2 [&>th]:border-x [&>th]:border-[#909090] [&>th]:align-top">
                    <th>Reference</th><th>Coordinate</th><th colSpan={3}>Node Coordinates</th><th />
                  </tr>
                  <tr className="h-2.5 leading-2 [&>th]:border-x [&>th]:border-b [&>th]:border-[#909090] [&>th]:align-top">
                    <th>Node</th><th>System</th><th>X [m]</th><th>Y [m]</th><th>Z [m]</th><th>Comment</th>
                  </tr>
                </thead>
              </table>
              <div className="flex w-3 shrink-0 flex-col items-center justify-between py-1">
                <svg viewBox="0 0 6 4" className="h-1 w-1.5"><path d="M1 3.500L3 1L5 3.500" fill="none" stroke="#333" /></svg>
                <svg viewBox="0 0 6 4" className="h-1 w-1.5"><path d="M1 .5L3 3L5 .5" fill="none" stroke="#333" /></svg>
              </div>
            </div>
            <div className="flex h-[23px] items-start pt-px font-['Liberation_Sans',Arial,sans-serif]">
              <div className="flex flex-1 gap-px">
                {tableTabs.map((t, i) => (
                  <button key={t} className={clsx("h-[11px] rounded-b-sm border-r border-b border-[#777] px-px whitespace-nowrap", i === 0 ? "bg-white" : "bg-[#ececec]")}>{t}</button>
                ))}
              </div>
              <div className="flex">
                {["M3 2V6M6 2L4 4L6 6", "M5 2L3 4L5 6", "M3 2L5 4L3 6", "M2 2L4 4L2 6M5 2V6"].map((d) => (
                  <button key={d} aria-label="Scroll tabs" className="grid size-2.5 place-items-center border border-[#bbb] bg-[#f3f3f3]">
                    <svg viewBox="0 0 8 8" className="size-2"><path d={d} fill="none" stroke="#777" strokeWidth=".9" /></svg>
                  </button>
                ))}
              </div>
            </div>
          </section>
        </div>
      </main>

      <footer className="flex h-3.5 items-center bg-gradient-to-b from-[#c9ced8] via-[#a9b0bc] to-[#c0c6d0] pr-1 pl-[2px] font-['Liberation_Sans',Arial,sans-serif] whitespace-nowrap">
        <span className="w-[275px]">Workplane</span>
        <div className="flex flex-1 gap-px">
          {modes.map((m) => (
            <button key={m} className={clsx("h-3 border px-px", m === "GRID" ? "border-[#c5cad3]" : "border-[#4e525a] border-r-[#d5d9e0] border-b-[#d5d9e0]")}>{m}</button>
          ))}
        </div>
        <span className="w-[57px]">CS: Global XYZ</span>
        <span className="w-14">Plane: XY</span>
        <span className="w-[46px]">X:&nbsp; 0.929 m</span>
        <span className="w-[47px]">Y:&nbsp; -13.864 m</span>
        <span className="w-[51px]">Z:&nbsp; 0.000 m</span>
      </footer>
    </div>
  );
}
